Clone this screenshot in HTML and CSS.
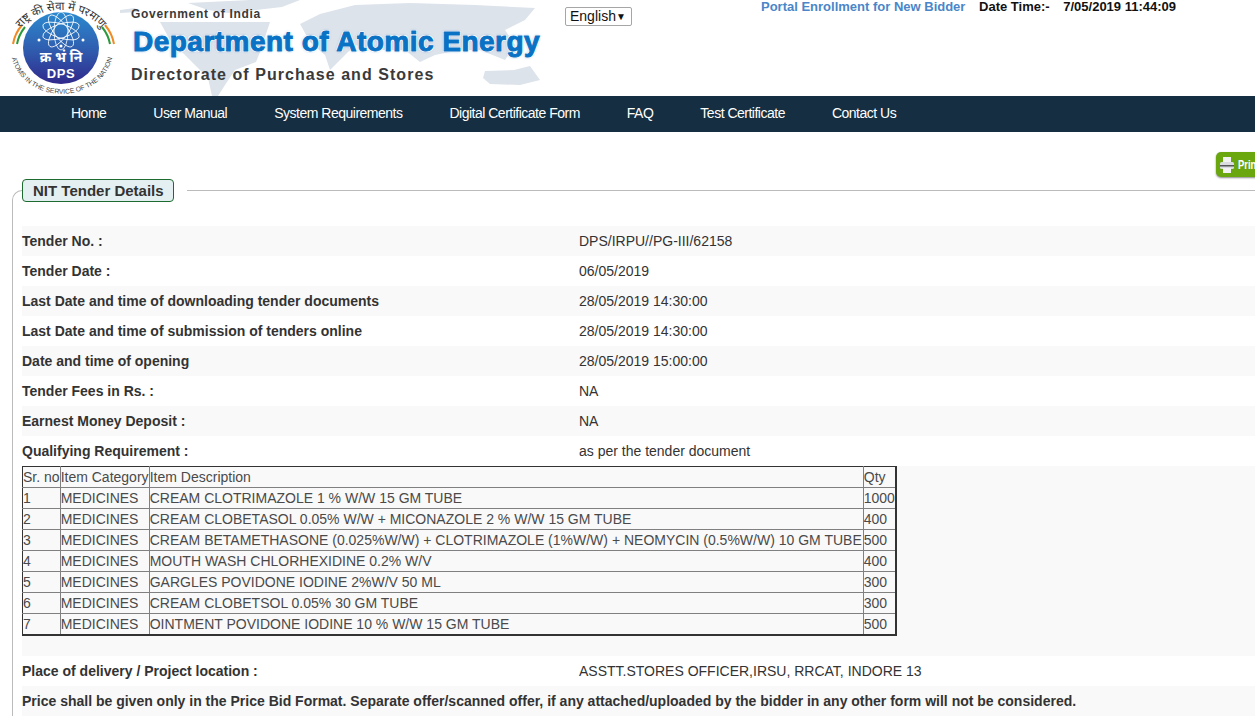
FILE: index.html
```html
<!DOCTYPE html>
<html lang="en">
<head>
  <meta charset="UTF-8" />
  <title>NIT Tender Details</title>
  <link rel="stylesheet" href="styles.css">
</head>
<body>
  <div class="page">
    <div class="header">
      <!-- world map behind the title -->
      <svg class="map" width="430" height="96" viewBox="0 0 430 96">
        <path fill="#dde3eb" d="M0 10 L15 8 L18 12 L0 13Z"/>
        <path fill="#dde3eb" d="M68 3 L130 0 L180 0 L162 7 L128 11 L108 13 L88 10Z"/>
        <path fill="#dde3eb" d="M40 22 L150 22 L140 52 L136 62 L115 70 L105 85 L98 96 L92 96 L88 78 L78 68 L66 56 L50 40Z"/>
        <path fill="#dde3eb" d="M180 24 L200 14 L235 5 L290 3 L355 5 L415 8 L405 20 L385 30 L395 45 L385 60 L360 50 L340 50 L315 55 L300 62 L285 50 L260 50 L235 45 L222 58 L210 70 L205 55 L190 42Z"/>
        <path fill="#dde3eb" d="M365 71 L394 70 L410 66 L420 80 L400 85 L370 84 L363 78Z"/>
      </svg>

      <svg class="logo" width="110" height="96" viewBox="0 0 110 96">
        <defs>
          <linearGradient id="disc" x1="0" y1="0" x2="0" y2="1">
            <stop offset="0" stop-color="#2b8ad0"/>
            <stop offset="0.5" stop-color="#2f5fb0"/>
            <stop offset="1" stop-color="#30298c"/>
          </linearGradient>
          <path id="arcTop" d="M4 48 A47 38 0 0 1 98 48"/>
          <path id="arcBottom" d="M1 50 A50 43 0 0 0 103 50"/>
        </defs>
        <ellipse cx="51" cy="48" rx="38" ry="36" fill="url(#disc)"/>
        <g fill="none" stroke="#fff" stroke-width="0.8">
          <ellipse cx="51" cy="31" rx="7" ry="19"/>
          <ellipse cx="51" cy="31" rx="7" ry="19" transform="rotate(36 51 31)"/>
          <ellipse cx="51" cy="31" rx="7" ry="19" transform="rotate(72 51 31)"/>
          <ellipse cx="51" cy="31" rx="7" ry="19" transform="rotate(108 51 31)"/>
          <ellipse cx="51" cy="31" rx="7" ry="19" transform="rotate(144 51 31)"/>
        </g>
        <circle cx="29" cy="40" r="1.5" fill="#fff"/>
        <circle cx="73" cy="40" r="1.5" fill="#fff"/>
        <circle cx="51" cy="46" r="1.5" fill="#fff"/>
        <g fill="none" stroke-width="2">
          <path stroke="#f08a24" d="M3 44 A48 42 0 0 1 12 25"/>
          <path stroke="#2c9a3c" d="M7 44 A44 40 0 0 1 15 27"/>
          <path stroke="#f08a24" d="M104 44 A48 42 0 0 0 95 25"/>
          <path stroke="#2c9a3c" d="M100 44 A44 40 0 0 0 92 27"/>
        </g>
        <text class="logo-hi" x="51" y="62" text-anchor="middle">क्र भं नि</text>
        <text class="logo-dps" x="51" y="78" text-anchor="middle">DPS</text>
        <text class="logo-ring"><textPath href="#arcTop" startOffset="50%" text-anchor="middle">राष्ट्र की सेवा में परमाणु</textPath></text>
        <text class="logo-ring-en"><textPath href="#arcBottom" startOffset="50%" text-anchor="middle">ATOMS IN THE SERVICE OF THE NATION</textPath></text>
      </svg>

      <div class="title">
        <div class="gov">Government of India</div>
        <div class="dept">Department of Atomic Energy</div>
        <div class="dir">Directorate of Purchase and Stores</div>
      </div>

      <div class="lang"><span>English</span><span class="caret">▼</span></div>

      <div class="top-links">
        <a class="portal" href="#">Portal Enrollment for New Bidder</a>
        <span class="dt-label">Date Time:-</span>
        <span class="dt-value">7/05/2019 11:44:09</span>
      </div>
    </div>

    <div class="nav">
      <a href="#">Home</a>
      <a href="#">User Manual</a>
      <a href="#">System Requirements</a>
      <a href="#">Digital Certificate Form</a>
      <a href="#">FAQ</a>
      <a href="#">Test Certificate</a>
      <a href="#">Contact Us</a>
    </div>

    <div class="print-row">
      <a class="print-btn" href="#">
        <svg width="16" height="18" viewBox="0 0 16 18">
          <rect x="4" y="1" width="8" height="6" fill="#f2f2f2"/>
          <rect x="1" y="6" width="14" height="7" rx="1.5" fill="#d9dde0"/>
          <rect x="1" y="9" width="14" height="1.5" fill="#555"/>
          <rect x="4" y="12" width="8" height="5" fill="#f2f2f2"/>
        </svg>
        <span class="print-label">Print</span>
      </a>
    </div>

    <fieldset class="details">
      <legend><span>NIT Tender Details</span></legend>
      <div class="row"><div class="lbl">Tender No. :</div><div>DPS/IRPU//PG-III/62158</div></div>
      <div class="row"><div class="lbl">Tender Date :</div><div>06/05/2019</div></div>
      <div class="row"><div class="lbl">Last Date and time of downloading tender documents</div><div>28/05/2019 14:30:00</div></div>
      <div class="row"><div class="lbl">Last Date and time of submission of tenders online</div><div>28/05/2019 14:30:00</div></div>
      <div class="row"><div class="lbl">Date and time of opening</div><div>28/05/2019 15:00:00</div></div>
      <div class="row"><div class="lbl">Tender Fees in Rs. :</div><div>NA</div></div>
      <div class="row"><div class="lbl">Earnest Money Deposit :</div><div>NA</div></div>
      <div class="row"><div class="lbl">Qualifying Requirement :</div><div>as per the tender document</div></div>

      <div class="table-wrap">
        <table class="items">
          <tr><td>Sr. no</td><td>Item Category</td><td>Item Description</td><td>Qty</td></tr>
          <tr><td>1</td><td>MEDICINES</td><td>CREAM CLOTRIMAZOLE 1 % W/W 15 GM TUBE</td><td>1000</td></tr>
          <tr><td>2</td><td>MEDICINES</td><td>CREAM CLOBETASOL 0.05% W/W + MICONAZOLE 2 % W/W 15 GM TUBE</td><td>400</td></tr>
          <tr><td>3</td><td>MEDICINES</td><td>CREAM BETAMETHASONE (0.025%W/W) + CLOTRIMAZOLE (1%W/W) + NEOMYCIN (0.5%W/W) 10 GM TUBE</td><td>500</td></tr>
          <tr><td>4</td><td>MEDICINES</td><td>MOUTH WASH CHLORHEXIDINE 0.2% W/V</td><td>400</td></tr>
          <tr><td>5</td><td>MEDICINES</td><td>GARGLES POVIDONE IODINE 2%W/V 50 ML</td><td>300</td></tr>
          <tr><td>6</td><td>MEDICINES</td><td>CREAM CLOBETSOL 0.05% 30 GM TUBE</td><td>300</td></tr>
          <tr><td>7</td><td>MEDICINES</td><td>OINTMENT POVIDONE IODINE 10 % W/W 15 GM TUBE</td><td>500</td></tr>
        </table>
      </div>

      <div class="row"><div class="lbl">Place of delivery / Project location :</div><div>ASSTT.STORES OFFICER,IRSU, RRCAT, INDORE 13</div></div>
      <div class="row note"><div class="lbl">Price shall be given only in the Price Bid Format. Separate offer/scanned offer, if any attached/uploaded by the bidder in any other form will not be considered.</div></div>
    </fieldset>
  </div>
</body>
</html>
```

FILE: styles.css
```css
html, body {
  margin: 0;
  padding: 0;
  height: 724px;
  overflow: hidden;
  background-color: #fff;
}
body {
  font-family: 'Liberation Sans', Arial, 'Noto Sans', sans-serif;
  font-size: 14px;
  color: #333;
}
a {
  text-decoration: none;
}
.page {
  width: 1290px;
}

/* header */
.header {
  position: relative;
  height: 96px;
  display: flex;
  overflow: hidden;
}
.map {
  position: absolute;
  left: 120px;
  top: 0;
}
.logo {
  position: relative;
  flex: none;
  margin-left: 10px;
  width: 110px;
  height: 96px;
}
.logo-hi {
  font: bold 14px 'Noto Sans', 'Noto Sans CJK SC', sans-serif;
  fill: #fff;
}
.logo-dps {
  font: bold 13px 'Liberation Sans', sans-serif;
  letter-spacing: 0.6px;
  fill: #fff;
}
.logo-ring {
  font: 11.5px 'Noto Sans', sans-serif;
  fill: #333;
}
.logo-ring-en {
  font: 6.8px 'Liberation Sans', sans-serif;
  fill: #444;
}
.title {
  position: relative;
  flex: none;
  width: 435px;
  margin-left: 11px;
  padding-top: 7px;
  font-weight: bold;
}
.gov {
  font-size: 12px;
  line-height: 14px;
  letter-spacing: 0.7px;
  color: #3a3a3a;
}
.dept {
  margin-top: 5px;
  margin-left: 2px;
  font-size: 28px;
  line-height: 32px;
  letter-spacing: 0.48px;
  white-space: nowrap;
  color: #0a72c4;
  -webkit-text-stroke: 1px #0a72c4;
  text-shadow: 1px 1px 0 #fff, -1px -1px 0 #fff, 1px -1px 0 #fff, -1px 1px 0 #fff, 0 0 3px #5f97d0;
}
.dir {
  margin-top: 8px;
  font-size: 16px;
  line-height: 18px;
  letter-spacing: 1.05px;
  white-space: nowrap;
  color: #3a3a3a;
}
.lang {
  position: relative;
  flex: none;
  box-sizing: border-box;
  width: 67px;
  height: 19px;
  margin: 7px 0 0 -1px;
  padding: 0 5px 0 4px;
  border: 1px solid #a6a6a6;
  border-radius: 2px;
  background-color: #fff;
  color: #111;
  line-height: 17px;
  display: flex;
  justify-content: space-between;
}
.caret {
  font-size: 10px;
}
.top-links {
  position: relative;
  margin-left: 129px;
  font-size: 13px;
  font-weight: bold;
  white-space: nowrap;
  color: #111;
  line-height: 13px;
}
.portal {
  color: #4a86c8;
  margin-right: 10px;
}
.dt-value {
  margin-left: 10px;
}

/* menu bar */
.nav {
  height: 36px;
  box-sizing: border-box;
  padding: 0 0 2px 47.5px;
  background-color: #152e41;
  display: flex;
  align-items: center;
}
.nav a {
  padding: 0 23.5px;
  color: #fff;
  font-size: 14px;
  letter-spacing: -0.5px;
}

/* print */
.print-row {
  height: 47px;
  padding: 20px 0 0 1216px;
  box-sizing: border-box;
}
.print-btn {
  display: flex;
  align-items: center;
  gap: 3px;
  box-sizing: border-box;
  width: 70px;
  height: 25px;
  padding-left: 3px;
  border-radius: 5px;
  background-color: #6aa70f;
  box-shadow: 0 1px 2px #888;
  color: #fff;
  font-size: 13px;
  font-weight: bold;
}
.print-label {
  display: inline-block;
  transform: scaleX(0.72);
  transform-origin: left center;
}

/* details */
.details {
  margin: 0 0 0 12px;
  padding: 24px 0 0 9px;
  border: none;
  border-top: 1px solid #bbb;
  border-left: 1px solid #bbb;
  border-top-left-radius: 10px;
}
.details legend {
  padding: 0 13px 0 0;
  margin: 0;
}
.details legend span {
  display: block;
  box-sizing: border-box;
  height: 23px;
  width: 152px;
  padding: 0 10px;
  border: 1px solid #1d6b2e;
  border-radius: 4px;
  background-color: #e4eff1;
  color: #333;
  font-size: 15px;
  font-weight: bold;
  line-height: 21px;
  white-space: nowrap;
}
.row {
  display: grid;
  grid-template-columns: 557px 1fr;
  align-items: center;
  height: 30px;
}
.row:nth-child(even) {
  background-color: #f9f9f9;
}
.lbl {
  font-weight: bold;
}
.note {
  display: block;
  line-height: 30px;
  white-space: nowrap;
  background-color: #f9f9f9;
}
.table-wrap {
  height: 190px;
  background-color: #f9f9f9;
}
.items {
  border-collapse: collapse;
  border-style: solid;
  border-color: #333;
  border-width: 1px 2px 2px 1px;
  width: 875px;
  color: #4a4a4a;
  font-size: 14px;
}
.items td {
  border: 1px solid #808080;
  padding: 0;
  height: 20px;
  line-height: 16px;
  white-space: nowrap;
}
/* let the dark table border win on the top and left edges */
.items tr:first-child td {
  border-top: none;
}
.items td:first-child {
  border-left: none;
}
```
